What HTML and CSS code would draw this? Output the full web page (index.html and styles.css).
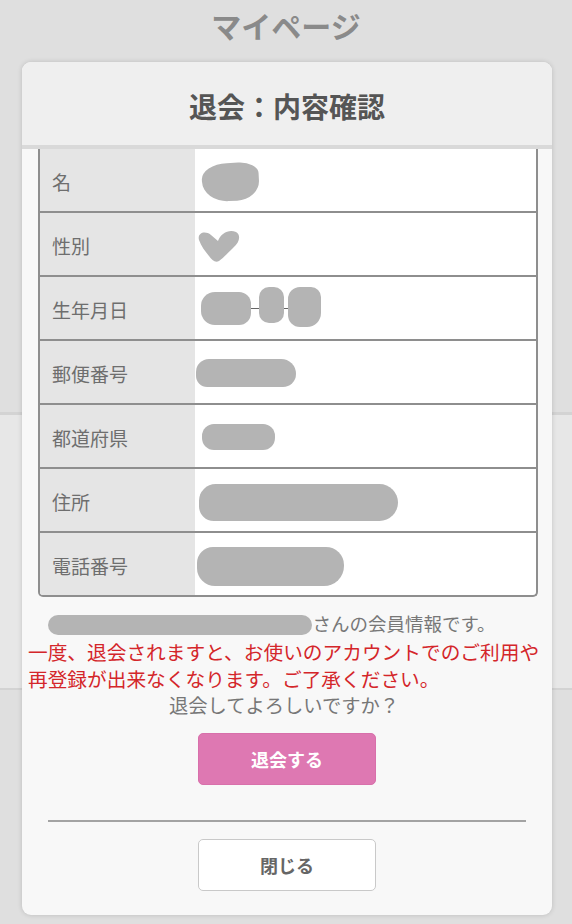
FILE: index.html
```html
<!DOCTYPE html>
<html lang="ja">
<head>
<meta charset="utf-8">
<title>マイページ</title>
<link rel="stylesheet" href="styles.css">
</head>
<body>
<header class="topbar">マイページ</header>
<section class="modal">
  <div class="modal-head">退会：内容確認</div>
  <div class="modal-body">
    <div class="info-table">
      <div class="row first">
        <div class="label">名</div>
        <div class="value"><span class="blob b-name"></span></div>
      </div>
      <div class="row">
        <div class="label">性別</div>
        <div class="value">
          <svg class="heart" width="46" height="36" viewBox="0 0 46 36"><path d="M3 13 C1 6, 9 3, 15 8 L22 14 C25 6, 33 2, 40 5 C45 8, 44 15, 37 21 C31 27, 27 31, 23 34 C19 36, 16 33, 13 29 C9 24, 5 19, 3 13 Z" fill="#b4b4b4"/></svg>
        </div>
      </div>
      <div class="row">
        <div class="label">生年月日</div>
        <div class="value bday">
          <span class="blob b-y"></span><span class="dash"></span><span class="blob b-m"></span><span class="dash short"></span><span class="blob b-d"></span>
        </div>
      </div>
      <div class="row">
        <div class="label">郵便番号</div>
        <div class="value"><span class="blob b-zip"></span></div>
      </div>
      <div class="row">
        <div class="label">都道府県</div>
        <div class="value"><span class="blob b-pref"></span></div>
      </div>
      <div class="row">
        <div class="label">住所</div>
        <div class="value"><span class="blob b-addr"></span></div>
      </div>
      <div class="row last">
        <div class="label">電話番号</div>
        <div class="value"><span class="blob b-tel"></span></div>
      </div>
    </div>
  </div>
  <div class="notes">
    <p class="member"><span class="blob b-member"></span>さんの会員情報です。</p>
    <p class="warn">一度、退会されますと、お使いのアカウントでのご利用や<br>再登録が出来なくなります。ご了承ください。</p>
    <p class="ask">退会してよろしいですか？</p>
  </div>
  <button class="btn btn-primary" type="button">退会する</button>
  <hr class="divider">
  <button class="btn btn-close" type="button">閉じる</button>
</section>
</body>
</html>
```
FILE: styles.css
```css
* { box-sizing: border-box; margin: 0; padding: 0; }
html, body { width: 572px; height: 924px; overflow: hidden; }
body {
  font-family: "Noto Sans CJK JP", "Noto Sans", sans-serif;
  background: linear-gradient(to bottom,
    #dfdfdf 0, #dfdfdf 412px, #d3d3d3 412px, #d3d3d3 415px,
    #e7e7e7 415px, #e7e7e7 688px, #d3d3d3 688px, #d3d3d3 690px,
    #dfdfdf 690px);
}
.topbar {
  height: 62px;
  padding-bottom: 13px;
  display: flex;
  align-items: center;
  justify-content: center;
  font-size: 30px;
  font-weight: bold;
  color: #8a8a8a;
  line-height: 1;
}
.modal {
  margin-left: 22px;
  width: 530px;
  height: 853px;
  background: #f8f8f8;
  border-radius: 9px;
  box-shadow: 0 0 5px rgba(0,0,0,0.16);
  overflow: hidden;
  display: flex;
  flex-direction: column;
}
.modal-head {
  height: 87px;
  padding-top: 5px;
  background: #efefef;
  border-bottom: 4px solid #d9d9d9;
  display: flex;
  align-items: center;
  justify-content: center;
  font-size: 28px;
  font-weight: bold;
  color: #555;
  line-height: 1;
}
.modal-body { padding: 0 14px 0 16px; }
.info-table {
  border: 2px solid #8e8e8e;
  border-top: none;
  border-radius: 0 0 5px 5px;
  background: #fff;
  overflow: hidden;
}
.row {
  display: grid;
  grid-template-columns: 155px 1fr;
  height: 64px;
  border-bottom: 2px solid #8e8e8e;
}
.row.first { height: 64px; }
.row.last { height: 62px; border-bottom: none; }
.label {
  background: #e5e5e5;
  padding: 3px 0 0 12px;
  display: flex;
  align-items: center;
  font-size: 19px;
  color: #6e6e6e;
}
.value {
  display: flex;
  align-items: center;
}
.blob { display: block; background: #b4b4b4; }
.b-name {
  margin: 4px 0 0 7px;
  width: 57px; height: 38px;
  border-radius: 45% 35% 40% 45% / 40% 30% 50% 55%;
  transform: rotate(-3deg);
}
.heart { margin: 2px 0 0 1px; }
.bday { padding-left: 6px; }
.b-y { width: 50px; height: 33px; margin-top: 1px; border-radius: 14px 12px 12px 14px; }
.b-m { width: 25px; height: 36px; margin-top: -6px; border-radius: 10px; }
.b-d { width: 33px; height: 40px; margin-top: -3px; border-radius: 12px 10px 14px 12px; }
.dash { display: block; width: 8px; height: 1.5px; background: #666; margin-top: 1px; }
.dash.short { width: 4px; }
.b-zip { margin: 2px 0 0 1px; width: 100px; height: 28px; border-radius: 14px 16px 14px 12px; }
.b-pref { margin: 2px 0 0 7px; width: 73px; height: 26px; border-radius: 12px; }
.b-addr { margin: 4px 0 0 4px; width: 199px; height: 37px; border-radius: 18px 20px 20px 16px; }
.b-tel { margin: 4px 0 0 2px; width: 147px; height: 39px; border-radius: 16px 18px 20px 18px; }
.notes { padding: 0 6px; }
.member {
  margin-top: 13px;
  padding-right: 30px;
  display: flex;
  align-items: center;
  justify-content: center;
  line-height: 27px;
  font-size: 18.5px;
  color: #777;
}
.b-member { width: 264px; height: 20px; border-radius: 10px; margin-top: 2px; }
.warn {
  margin-top: 2px;
  font-size: 19.7px;
  line-height: 26.5px;
  color: #d4262a;
}
.ask {
  text-align: center;
  padding-right: 6px;
  font-size: 19.3px;
  line-height: 26px;
  color: #777;
}
.btn {
  display: block;
  width: 178px;
  height: 52px;
  margin: 0 auto;
  border-radius: 5px;
  font-family: inherit;
  font-size: 18px;
  font-weight: bold;
  line-height: 1;
}
.btn-primary {
  margin-top: 15px;
  background: #de78b2;
  border: 1px solid #d870ab;
  color: #fff;
}
.divider {
  margin: 35px 0 0 26px;
  width: 478px;
  height: 2px;
  border: none;
  background: #a3a3a3;
}
.btn-close {
  margin-top: 17px;
  background: #fff;
  border: 1px solid #c9c9c9;
  color: #666;
}
```
